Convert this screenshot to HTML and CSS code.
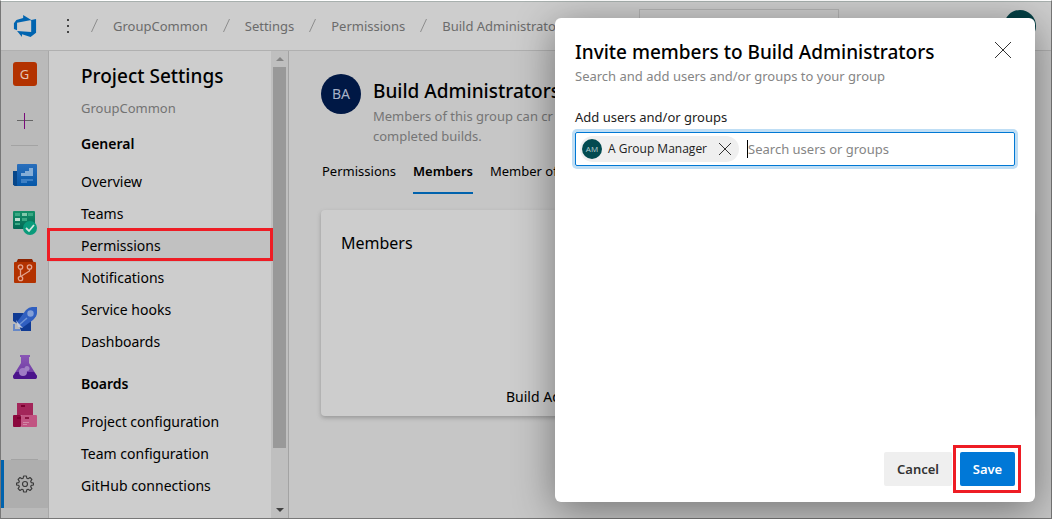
FILE: index.html
```html
<!DOCTYPE html>
<html lang="en">
<head>
<meta charset="utf-8">
<title>Project Settings - Permissions</title>
<link rel="stylesheet" href="styles.css">
</head>
<body>
<div class="app">
  <header class="topbar">
    <a class="logo" href="#" aria-label="Azure DevOps">
      <svg width="24" height="24" viewBox="-1 -1 26 26"><path fill="#0064b0" d="M24 4.500v14.700L18 24l-9.300-3v3L3.400 17.400l15.300 1.200V5.500zM18.800 5.600 10 0v3.300L2.700 5.500 0 8.900v6.300l3.400 1.400V8.500z"/></svg>
    </a>
    <button class="more" type="button" aria-label="More">
      <svg width="4" height="16" viewBox="0 0 4 16" fill="#444"><rect x="1" y="1" width="2" height="2"/><rect x="1" y="7" width="2" height="2"/><rect x="1" y="13" width="2" height="2"/></svg>
    </button>
    <nav class="crumbs" aria-label="Breadcrumb">
      <svg class="slash" viewBox="0 0 8 14"><path d="M6.500 0 .5 13"/></svg><a href="#">GroupCommon</a>
      <svg class="slash" viewBox="0 0 8 14"><path d="M6.500 0 .5 13"/></svg><a href="#">Settings</a>
      <svg class="slash" viewBox="0 0 8 14"><path d="M6.500 0 .5 13"/></svg><a href="#">Permissions</a>
      <svg class="slash" viewBox="0 0 8 14"><path d="M6.500 0 .5 13"/></svg><a href="#">Build Administrators</a>
    </nav>
    <input class="site-search" type="search" aria-label="Search">
    <span class="me"></span>
  </header>

  <div class="body">
    <nav class="rail" aria-label="Project">
      <a class="cell first" href="#"><span class="project">G</span></a>
      <a class="cell" href="#" aria-label="Add"><svg width="18" height="18" viewBox="0 0 18 18"><path d="M1 8.500h16" stroke="#666" stroke-width="1"/><path d="M8.500 1v16" stroke="#7a0a7a" stroke-width="1"/></svg></a>
      <hr>
      <a class="cell" href="#" aria-label="Overview"><svg width="24" height="24" viewBox="0 0 24 24"><defs><linearGradient id="ov" x2="0" y2="1"><stop stop-color="#2a6fbc"/><stop offset="1" stop-color="#0557a8"/></linearGradient></defs><path fill="#07478a" d="M0 8h5v15H1.500L0 21.500z"/><rect x="4" y="1" width="20" height="22" rx="1" fill="url(#ov)"/><path fill="#84add6" d="M8 10h4V8h4V5h4v8H8z"/><path fill="#3c7fc4" d="M8 16h12v2h-6v2H8z"/></svg></a>
      <a class="cell" href="#" aria-label="Boards"><svg width="24" height="24" viewBox="0 0 24 24"><defs><linearGradient id="bo" x2="0" y2="1"><stop stop-color="#149069"/><stop offset="1" stop-color="#046855"/></linearGradient></defs><rect width="22" height="18" y="0" rx="1" fill="url(#bo)"/><path fill="#3ba984" d="M2 2h5v3H2zM15 2h5v3h-5zM9 7h5v3H9zM2 12h5v2H2z"/><path fill="#82c9ac" d="M9 2h5v3H9z"/><path fill="#b7ddce" d="M2 7h5v3H2z"/><circle cx="17" cy="17" r="7" fill="#0a9b7b"/><path d="m13 17 3 3 5-6" fill="none" stroke="#d1e6e0" stroke-width="1.800"/></svg></a>
      <a class="cell" href="#" aria-label="Repos"><svg width="24" height="24" viewBox="0 0 24 24"><path fill="#8d2300" d="M5 0h14l2 4H3z"/><rect x="1" y="3" width="22" height="21" rx="1" fill="#b33200"/><g fill="none" stroke="#e3a48f" stroke-width="1.300"><circle cx="7.500" cy="8" r="2.200"/><circle cx="16.500" cy="8" r="2.200"/><circle cx="7.500" cy="19.500" r="2.200"/><path d="M7.500 10v7M16.500 10v2l-8 5"/></g></svg></a>
      <a class="cell" href="#" aria-label="Pipelines"><svg width="24" height="24" viewBox="0 0 24 24"><path fill="#103b94" d="M0 6h11L5 17l-5-3zM18 13v11H8l-2-6z"/><path fill="#305fc0" d="m4 15 9-12q3-3 6-3h5v6q0 3-4 7L9 21z"/><circle cx="17.500" cy="6.500" r="3.200" fill="#839fd6"/><path d="m6 18 8-7" stroke="#7196d6" stroke-width="1.500"/><path fill="#c1cade" d="m3 13 3 4 4 4-5-1z"/><path fill="#6688c7" d="M0 17h2v5h5v2H0z"/></svg></a>
      <a class="cell" href="#" aria-label="Test Plans"><svg width="24" height="24" viewBox="0 0 24 24"><defs><linearGradient id="te" x2="0" y2="1"><stop stop-color="#8a57b5"/><stop offset="1" stop-color="#6835a0"/></linearGradient></defs><path fill="url(#te)" d="M7 0h10v2h-1v6l8 13q0 3-2 3H2q-2 0-2-3L8 8V2H7z"/><path fill="#4b148b" d="M3 17h18l3 4q0 3-2 3H2q-2 0-2-3z"/><circle cx="10" cy="17" r="4" fill="#9f7bc4"/><circle cx="14" cy="13.500" r="2.500" fill="#a182c4"/></svg></a>
      <a class="cell" href="#" aria-label="Artifacts"><svg width="24" height="24" viewBox="0 0 24 24"><rect x="4" width="16" height="12" fill="#a3265a"/><rect y="12" width="8" height="12" rx="1" fill="#8b093e"/><rect x="8" y="12" width="16" height="12" rx="1" fill="#c15482"/><path fill="#79002f" d="M8 2h4v2H8zM4 14h4v2H4z"/><path fill="#8c1443" d="M12 14h4v2h-4z"/><path fill="#d288a6" d="M10 19h6v1h-6zM10 21h4v1h-4z"/></svg></a>
      <hr class="foot">
      <a class="cell settings" href="#" aria-label="Project settings"><svg width="18" height="18" viewBox="0 0 18 18" fill="none" stroke="#3c3c3c" stroke-width="1.200"><path stroke-linejoin="round" d="M7.600 1h2.800l.4 2.200 1.300.5 1.900-1.200 1.900 1.900-1.200 1.900.5 1.300 2.200.4v2l-2.200.4-.5 1.300 1.200 1.900-1.900 1.900-1.900-1.200-1.300.5-.4 2.200H7.600l-.4-2.200-1.300-.5L4 15.500l-1.900-1.900 1.200-1.900-.5-1.300L.6 10V8l2.200-.4.5-1.300-1.200-1.900L4 2.500l1.900 1.200 1.300-.5z"/><circle cx="9" cy="9" r="2.500"/></svg></a>
    </nav>

    <aside class="panel">
      <div class="panel-scroll">
        <h1>Project Settings</h1>
        <p class="project-name">GroupCommon</p>
        <h2>General</h2>
        <a class="item" href="#">Overview</a>
        <a class="item" href="#">Teams</a>
        <a class="item current" href="#">Permissions</a>
        <a class="item" href="#">Notifications</a>
        <a class="item" href="#">Service hooks</a>
        <a class="item" href="#">Dashboards</a>
        <h2>Boards</h2>
        <a class="item" href="#">Project configuration</a>
        <a class="item" href="#">Team configuration</a>
        <a class="item" href="#">GitHub connections</a>
      </div>
      <div class="scrollbar">
        <svg width="8" height="4" viewBox="0 0 8 4"><path fill="#858585" d="M4 0l4 4H0z"/></svg>
        <span class="thumb"></span>
        <svg width="8" height="4" viewBox="0 0 8 4"><path fill="#404040" d="M0 0h8L4 4z"/></svg>
      </div>
    </aside>

    <main class="main">
      <div class="group">
        <span class="group-avatar">BA</span>
        <div>
          <h2>Build Administrators</h2>
          <p>Members of this group can cr<br>completed builds.</p>
        </div>
      </div>
      <div class="tabs" role="tablist">
        <button type="button" role="tab">Permissions</button>
        <button type="button" role="tab" class="active" aria-selected="true">Members</button>
        <button type="button" role="tab">Member of</button>
      </div>
      <section class="card">
        <h3>Members</h3>
        <p>Build Administrators</p>
      </section>
    </main>
  </div>
</div>

<form class="dialog" role="dialog" aria-labelledby="dialog-title">
  <div class="dialog-head">
    <div>
      <h2 id="dialog-title">Invite members to Build Administrators</h2>
      <p>Search and add users and/or groups to your group</p>
    </div>
    <button class="close" type="button" aria-label="Close"><svg width="16" height="16" viewBox="0 0 16 16"><path d="m0 0 16 16M16 0 0 16"/></svg></button>
  </div>
  <label for="people">Add users and/or groups</label>
  <div class="picker">
    <span class="chip"><span class="chip-avatar">AM</span>A Group Manager<button type="button" aria-label="Remove"><svg width="12" height="12" viewBox="0 0 12 12"><path d="m0 0 12 12M12 0 0 12"/></svg></button></span>
    <span class="caret"></span>
    <input id="people" type="text" placeholder="Search users or groups">
  </div>
  <div class="actions">
    <button class="cancel" type="button">Cancel</button>
    <button class="save" type="submit">Save</button>
  </div>
</form>
</body>
</html>
```

FILE: styles.css
```css
* { box-sizing: border-box; }
body, h1, h2, h3, p { margin: 0; }
body {
  font: 14px/20px "Noto Sans", "Open Sans", sans-serif;
  color: #000;
  overflow: hidden;
}
a { color: inherit; text-decoration: none; }
button { font: inherit; color: inherit; border: 0; padding: 0; background: none; }

.app {
  display: flex;
  flex-direction: column;
  height: 100vh;
  border: 1px solid #777;
  border-top-color: #fff;
  background: #cdcdcd;
}

.topbar {
  display: flex;
  align-items: center;
  height: 50px;
  flex: none;
  padding: 0 15px 0 12px;
  border-top: 1px solid #a8b0ae;
  border-bottom: 1px solid #b0b0b0;
  color: #6b6b6b;
}
.logo, .more, .rail .cell { display: flex; align-items: center; justify-content: center; }
.more { width: 16px; height: 32px; margin-left: 23px; }
.crumbs { display: flex; align-items: center; margin-left: 15px; font-size: 13px; white-space: nowrap; flex: 1; }
.slash { width: 8px; height: 14px; margin: 0 14px 0 0; fill: none; stroke: #8c8c8c; }
.crumbs a + .slash { margin-left: 15px; }
.site-search {
  width: 200px;
  height: 34px;
  margin-right: 165px;
  border: 1px solid #b4b4b4;
  background: #cdcdcd;
}
.me { width: 32px; height: 32px; border-radius: 50%; background: #044045; }

.body { display: flex; flex: 1; min-height: 0; }

.rail {
  display: flex;
  flex-direction: column;
  flex: none;
  width: 48px;
  padding-bottom: 10px;
  background: #bababa;
  border-right: 1px solid #a8a8a8;
}
.rail .cell { height: 48px; flex: none; }
.rail .first { height: 46px; }
.rail hr { width: 27px; height: 1px; margin: 0 10px 5px; border: 0; background: #a3a3a3; flex: none; }
.rail .foot { margin: auto 10px 0; }
.rail .settings { background: #aeaeae; border-left: 3px solid #0062ad; padding-right: 3px; }
.project {
  width: 24px;
  border-radius: 3px;
  background: #b33200;
  color: #e2c3b7;
  font-size: 13px;
  line-height: 24px;
  text-align: center;
}

.panel { display: flex; flex: none; width: 240px; border-right: 1px solid #a3a3a3; }
.panel-scroll { flex: 1; padding-top: 9px; }
.panel h1 { padding-left: 32px; font-size: 19px; line-height: 32px; font-weight: 500; }
.panel h2 { height: 48px; padding: 4px 0 0 32px; font-size: 14px; line-height: 44px; font-weight: 600; }
.project-name { margin-top: 6px; padding-left: 32px; font-size: 13px; color: #737373; }
.item { display: block; position: relative; padding-left: 32px; line-height: 32px; }
.current { background: #c1c1c1; }
.current::after { content: ""; position: absolute; inset: -2px -2px 1px; border: 3px solid #ee1c24; }
.scrollbar {
  display: flex;
  flex-direction: column;
  align-items: center;
  width: 17px;
  padding: 6px 0;
  background: #bfbfbf;
}
.thumb { width: 13px; flex: 0 1 381px; margin: 6px 0 auto; background: #999; }

.main { flex: 1; min-width: 0; padding: 23px 17px 0 32px; background: #c6c6c6; overflow: hidden; }
.group { display: flex; gap: 12px; white-space: nowrap; }
.group-avatar {
  flex: none;
  width: 40px;
  height: 40px;
  border-radius: 50%;
  background: #001845;
  color: #a7b2c8;
  font-size: 14px;
  line-height: 40px;
  text-align: center;
}
.group h2 { margin-top: 2px; font-size: 19px; line-height: 30px; font-weight: 500; }
.group p { font-size: 13px; color: #757575; }
.tabs { display: flex; gap: 17px; padding-left: 1px; margin-top: 2px; font-size: 13px; }
.tabs button { height: 46px; padding-top: 2px; border-bottom: 2px solid transparent; white-space: nowrap; }
.tabs .active { border-color: #0062ad; font-weight: 600; }
.card {
  display: flex;
  flex-direction: column;
  justify-content: space-between;
  height: 206px;
  margin-top: 16px;
  padding: 21px 20px 9px;
  border-radius: 4px;
  background: #cdcdcd;
  box-shadow: 0 2px 4px #999;
}
.card h3 { font-size: 16px; line-height: 24px; font-weight: 400; }
.card p { padding-left: 165px; }

.dialog {
  position: absolute;
  inset: 18px 17px 17px auto;
  display: flex;
  flex-direction: column;
  width: 480px;
  padding: 20px 20px 16px;
  border-radius: 6px;
  background: #fff;
  box-shadow: 0 8px 40px rgba(0, 0, 0, .42);
}
.dialog-head { display: flex; justify-content: space-between; align-items: flex-start; }
.dialog h2 { font-size: 19px; line-height: 28px; font-weight: 500; }
.dialog p { font-size: 13px; color: #858585; }
.dialog svg { display: block; fill: none; stroke: #333; }
.close { padding: 4px; }
.dialog label { margin-top: 21px; font-size: 13px; color: #222; }
.picker {
  display: flex;
  align-items: center;
  height: 34px;
  margin-top: 5px;
  padding: 0 4px;
  border: 1px solid #0078d4;
  border-radius: 2px;
  box-shadow: 0 0 0 3px #bfdef5;
}
.chip {
  display: flex;
  align-items: center;
  flex: none;
  height: 26px;
  padding: 0 8px 0 2px;
  border-radius: 13px;
  background: #efefef;
  color: #222;
  font-family: "Open Sans", "Noto Sans", sans-serif;
  font-size: 12px;
}
.chip-avatar {
  width: 20px;
  margin-right: 6px;
  border-radius: 50%;
  background: #024b50;
  color: #b6d0d1;
  font-size: 8px;
  text-align: center;
}
.chip button { margin-left: 12px; }
.caret { width: 1px; height: 18px; margin-left: 8px; background: #000; }
.picker input { flex: 1; min-width: 0; padding: 0; border: 0; outline: 0; font: inherit; font-size: 13px; background: none; }
.picker input::placeholder { color: #858585; opacity: 1; }
.actions { display: flex; justify-content: flex-end; gap: 8px; margin-top: auto; font-size: 13px; font-weight: 600; }
.actions button { height: 34px; border-radius: 2px; }
.cancel { width: 68px; background: #efefef; color: #333; }
.save { position: relative; width: 55px; background: #0078d7; color: #fff; }
.save::after { content: ""; position: absolute; inset: -7px -6px -7px -7px; border: 3px solid #ee1c24; }
```
